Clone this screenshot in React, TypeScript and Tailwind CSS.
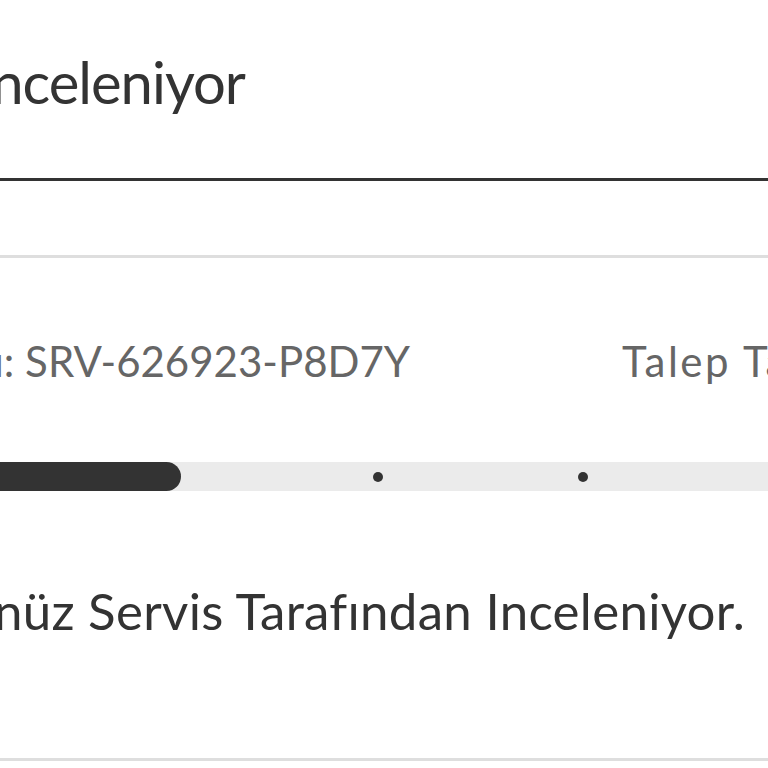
export default function App() {
  return (
    <div className="w-[768px] h-[768px] overflow-hidden bg-white text-[#333333] font-['Lato','Noto_Sans',sans-serif]">
      {/* page title, cut at the left edge */}
      <div className="pt-[53px] flex">
        <div className="w-[245px] shrink-0 flex justify-end">
          <h1 className="whitespace-nowrap text-[58px] leading-none font-normal tracking-[-1px]">Ürününüz İnceleniyor</h1>
        </div>
      </div>
      <div className="mt-[67px] h-[3px] bg-[#333333]" />
      <div className="mt-[74px] h-[3px] bg-[#dedede]" />

      {/* request meta */}
      <div className="mt-[82px] flex text-[42px] leading-none text-[#666666] whitespace-nowrap">
        <div className="w-[410px] shrink-0 flex justify-end">
          <span>Talep Numarası: SRV-626923-P8D7Y</span>
        </div>
        <span className="ml-[212px] tracking-[2.5px]">Talep Tarihi: 12.03.2024</span>
      </div>

      {/* progress */}
      <div className="mt-[80px] h-[29px] bg-[#ebebeb] flex items-center">
        <div className="w-[181px] h-full bg-[#333333] rounded-r-full shrink-0" />
        <div className="ml-[192px] w-[10px] h-[10px] rounded-full bg-[#333333] shrink-0" />
        <div className="ml-[195px] w-[10px] h-[10px] rounded-full bg-[#333333] shrink-0" />
      </div>

      {/* status text */}
      <div className="mt-[94px] flex">
        <div className="w-[745px] shrink-0 flex justify-end">
          <p className="whitespace-nowrap text-[51px] leading-none tracking-[0.3px]">Ürününüz Servis Tarafından Inceleniyor.</p>
        </div>
      </div>
      <div className="mt-[122px] h-[3px] bg-[#dedede]" />
    </div>
  );
}
